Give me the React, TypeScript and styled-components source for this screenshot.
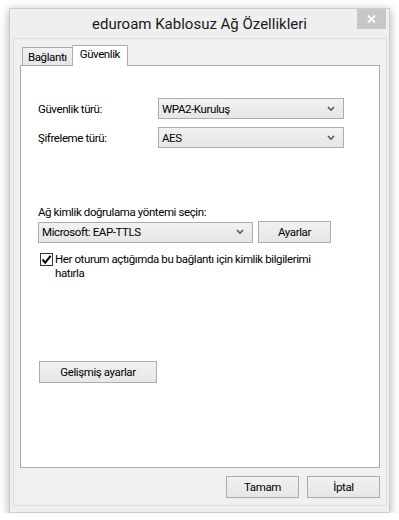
// App.tsx
// eduroam wireless properties dialog (Windows 8 style)

import * as React from "react";
import styled, { createGlobalStyle, css } from "styled-components";

const GlobalStyle = createGlobalStyle`
  html, body {
    margin: 0;
    padding: 0;
    background: #ffffff;
  }
  body {
    font-family: Roboto, "Noto Sans", sans-serif;
    font-size: 11.5px;
    letter-spacing: -0.4px;
    color: #000000;
  }
`;

const Chevron = () => (
  <svg width="8" height="6" viewBox="0 0 8 6">
    <path d="M1 1 L4 4.2 L7 1" fill="none" stroke="#555" strokeWidth="1.6" />
  </svg>
);

const CloseGlyph = () => (
  <svg width="9" height="8" viewBox="0 0 9 8">
    <path d="M1 0.5 L8 7.5 M8 0.5 L1 7.5" stroke="#fff" strokeWidth="1.8" />
  </svg>
);

const CheckGlyph = () => (
  <svg width="11" height="11" viewBox="0 0 11 11">
    <path d="M1.5 5.5 L4.2 8.6 L9.6 1.8" fill="none" stroke="#000" strokeWidth="2" />
  </svg>
);

const ComboBox = ({ value, width }: { value: string; width: number }) => (
  <Combo $width={width}>
    <span>{value}</span>
    <Chevron />
  </Combo>
);

const App = () => {
  return (
    <Page>
      <GlobalStyle />
      <Window>
        <TitleBar>
          <span />
          <Title>eduroam Kablosuz Ağ Özellikleri</Title>
          <CloseButton>
            <CloseGlyph />
          </CloseButton>
        </TitleBar>
        <Client>
          <TabStrip>
            <Tab>Bağlantı</Tab>
            <Tab $active>Güvenlik</Tab>
          </TabStrip>
          <Panel>
            <FieldGrid>
              <FieldLabel>Güvenlik türü:</FieldLabel>
              <ComboBox value="WPA2-Kuruluş" width={186} />
              <FieldLabel>Şifreleme türü:</FieldLabel>
              <ComboBox value="AES" width={186} />
            </FieldGrid>
            <AuthSection>
              <FieldLabel>Ağ kimlik doğrulama yöntemi seçin:</FieldLabel>
              <AuthRow>
                <ComboBox value="Microsoft: EAP-TTLS" width={215} />
                <PushButton $width={73}>Ayarlar</PushButton>
              </AuthRow>
              <CheckRow>
                <CheckBox>
                  <CheckGlyph />
                </CheckBox>
                <CheckText>
                  Her oturum açtığımda bu bağlantı için kimlik bilgilerimi
                  hatırla
                </CheckText>
              </CheckRow>
            </AuthSection>
            <AdvancedRow>
              <PushButton $width={118}>Gelişmiş ayarlar</PushButton>
            </AdvancedRow>
          </Panel>
          <Footer>
            <PushButton $width={73}>Tamam</PushButton>
            <PushButton $width={73}>İptal</PushButton>
          </Footer>
        </Client>
      </Window>
    </Page>
  );
};
export default App;

const Page = styled.div`
  padding: 8px 0 0 9px;
`;

const Window = styled.div`
  box-sizing: border-box;
  width: 381px;
  height: 505px;
  display: flex;
  flex-direction: column;
  background: #efefef;
  border: 1px solid #cdcdcd;
  box-shadow: 0 2px 9px rgba(0, 0, 0, 0.32);
`;

const TitleBar = styled.div`
  height: 29px;
  display: grid;
  grid-template-columns: 1fr auto 1fr;
  align-items: start;
`;

const Title = styled.div`
  align-self: center;
  font-size: 15px;
  letter-spacing: 0;
  color: #1a1a1a;
  padding-top: 1px;
  white-space: nowrap;
`;

const CloseButton = styled.div`
  justify-self: end;
  margin-right: 3px;
  width: 29px;
  height: 20px;
  background: #c7c7c7;
  display: flex;
  align-items: center;
  justify-content: center;
`;

const Client = styled.div`
  flex: 1;
  display: flex;
  flex-direction: column;
  margin: 0 2px 6px 3px;
  padding: 6px 6px 7px 6px;
  border: 1px solid #dcdcdc;
  background: #f0f0f0;
`;

const TabStrip = styled.div`
  display: flex;
  align-items: flex-end;
  height: 20px;
  padding-left: 2px;
  position: relative;
  z-index: 1;
`;

const Tab = styled.div<{ $active?: boolean }>`
  box-sizing: border-box;
  height: 18px;
  padding: 0 5px;
  display: flex;
  align-items: center;
  border: 1px solid #acacac;
  border-bottom: none;
  background: linear-gradient(#f2f2f2, #e6e6e6);
  ${(p) =>
    p.$active &&
    css`
      height: 21px;
      margin-left: -1px;
      margin-bottom: -1px;
      padding: 0 7px 4px 7px;
      background: #ffffff;
    `}
`;

const Panel = styled.div`
  flex: 1;
  display: flex;
  flex-direction: column;
  border: 1px solid #acacac;
  background: #ffffff;
  padding: 32px 0 0 17px;
`;

const FieldGrid = styled.div`
  display: grid;
  grid-template-columns: 120px auto;
  row-gap: 8px;
  align-items: center;
  justify-content: start;
`;

const FieldLabel = styled.div`
  line-height: 16px;
`;

const Combo = styled.div<{ $width: number }>`
  box-sizing: border-box;
  width: ${(p) => p.$width}px;
  height: 21px;
  display: flex;
  align-items: center;
  justify-content: space-between;
  padding: 0 8px 0 3px;
  border: 1px solid #acacac;
  background: linear-gradient(#f1f1f1, #e6e6e6);
`;

const PushButton = styled.div<{ $width: number }>`
  box-sizing: border-box;
  width: ${(p) => p.$width}px;
  height: 22px;
  display: flex;
  align-items: center;
  justify-content: center;
  border: 1px solid #acacac;
  background: linear-gradient(#f1f1f1, #e6e6e6);
`;

const AuthSection = styled.div`
  display: flex;
  flex-direction: column;
  margin-top: 56px;
`;

const AuthRow = styled.div`
  display: flex;
  gap: 5px;
  margin-top: 1px;
  align-items: center;
`;

const CheckRow = styled.div`
  display: flex;
  align-items: flex-start;
  gap: 2px;
  margin-top: 9px;
  padding-left: 2px;
`;

const CheckBox = styled.div`
  box-sizing: border-box;
  width: 13px;
  height: 13px;
  margin-top: 1px;
  border: 1px solid #333333;
  background: #ffffff;
  display: flex;
  align-items: center;
  justify-content: center;
`;

const CheckText = styled.div`
  width: 264px;
  line-height: 14px;
`;

const AdvancedRow = styled.div`
  display: flex;
  margin-top: 81px;
  padding-left: 1px;
`;

const Footer = styled.div`
  display: flex;
  justify-content: flex-end;
  gap: 8px;
  margin-top: 8px;
  padding-right: 0;
`;
